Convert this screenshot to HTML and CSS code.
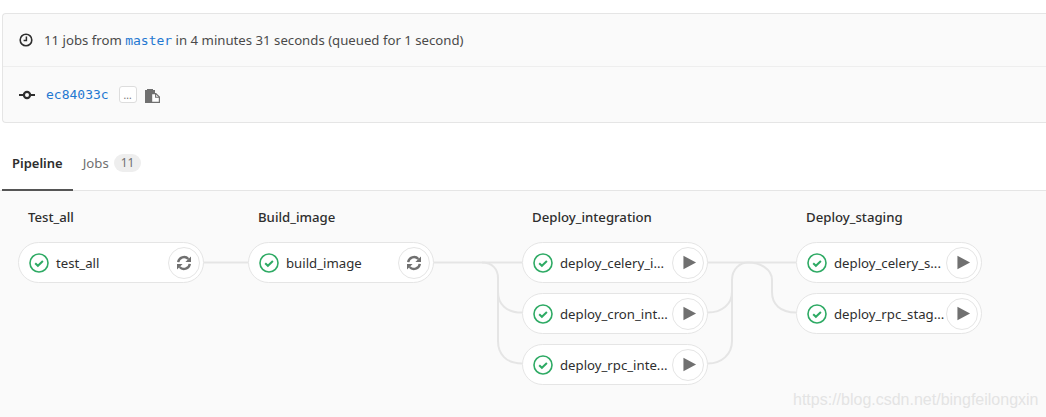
FILE: index.html
```html
<!DOCTYPE html>
<html lang="en">
<head>
    <meta charset="UTF-8">
    <meta name="viewport" content="width=device-width, initial-scale=1.0">
    <title>Pipeline</title>
    <link rel="stylesheet" href="styles.css">
</head>
<body>
    <svg class="icon-defs" width="0" height="0">
        <symbol id="status-ok" viewBox="0 0 20 20">
            <circle cx="10" cy="10" r="9" fill="#fff" stroke="#2eaa64" stroke-width="1.6"/>
            <path d="M6.2 10.2l2.7 2.6 5-4.8" fill="none" stroke="#2eaa64" stroke-width="2"/>
        </symbol>
        <symbol id="retry" viewBox="0 0 16 16">
            <path d="M2.2 7.2A5.9 5.9 0 0 1 12.4 4M13.8 8.8A5.9 5.9 0 0 1 3.6 12" fill="none" stroke="#707070" stroke-width="2.4"/>
            <path d="M15 1.4v5.6H9.4zM1 14.6V9h5.6z" fill="#707070"/>
        </symbol>
        <symbol id="play" viewBox="0 0 16 16">
            <path d="M1.5 0.8L15 8 1.5 15.2z" fill="#707070"/>
        </symbol>
    </svg>

    <div class="info-card">
        <div class="info-row">
            <svg class="info-icon" width="14" height="14" viewBox="0 0 14 14">
                <circle cx="7" cy="7" r="5.8" fill="none" stroke="#2e2e2e" stroke-width="1.6"/>
                <path d="M7.4 3.6v4H4.6" fill="none" stroke="#2e2e2e" stroke-width="1.5"/>
            </svg>
            <span>11 jobs from <a class="mono" href="#">master</a> in 4 minutes 31 seconds (queued for 1 second)</span>
        </div>
        <div class="info-row commit-row">
            <svg class="commit-icon" width="16" height="10" viewBox="0 0 16 10">
                <path d="M0 5h4M12 5h4" stroke="#2e2e2e" stroke-width="2"/>
                <circle cx="8" cy="5" r="3.1" fill="none" stroke="#2e2e2e" stroke-width="2.2"/>
            </svg>
            <a class="mono" href="#">ec84033c</a>
            <span class="ellipsis-btn">...</span>
            <svg class="copy-icon" width="15" height="14" viewBox="0 0 15 14">
                <path d="M0 1h2V0h6v1h2v3H6v10H0z" fill="#707070"/>
                <path d="M6.6 4.6h4.2l3.6 3.4v5.4H6.6z" fill="#fff" stroke="#707070" stroke-width="1.2"/>
                <path d="M10.6 4.6v3.6h3.8" fill="none" stroke="#707070" stroke-width="1.1"/>
            </svg>
        </div>
    </div>

    <div class="tabs">
        <a class="tab active" href="#">Pipeline</a>
        <a class="tab" href="#">Jobs <span class="badge">11</span></a>
    </div>

    <div class="pipeline">
        <div class="stage">
            <h4>Test_all</h4>
            <div class="job">
                <svg class="status"><use href="#status-ok"/></svg>
                <span class="job-name">test_all</span>
                <span class="job-action"><svg class="retry-icon"><use href="#retry"/></svg></span>
            </div>
        </div>
        <svg class="link link-short" width="44" height="144" viewBox="0 0 44 144">
            <path d="M0 20.5H44"/>
        </svg>
        <div class="stage">
            <h4>Build_image</h4>
            <div class="job">
                <svg class="status"><use href="#status-ok"/></svg>
                <span class="job-name">build_image</span>
                <span class="job-action"><svg class="retry-icon"><use href="#retry"/></svg></span>
            </div>
        </div>
        <svg class="link" width="88" height="144" viewBox="0 0 88 144">
            <path d="M0 20.5H88"/>
            <path d="M48 20.5C58 20.5 64 27 64 36V50C64 62 72 70.5 88 70.5"/>
            <path d="M64 50V99C64 112 72 121.5 88 121.5"/>
        </svg>
        <div class="stage">
            <h4>Deploy_integration</h4>
            <div class="job">
                <svg class="status"><use href="#status-ok"/></svg>
                <span class="job-name">deploy_celery_i...</span>
                <span class="job-action"><svg class="play-icon"><use href="#play"/></svg></span>
            </div>
            <div class="job">
                <svg class="status"><use href="#status-ok"/></svg>
                <span class="job-name">deploy_cron_int...</span>
                <span class="job-action"><svg class="play-icon"><use href="#play"/></svg></span>
            </div>
            <div class="job">
                <svg class="status"><use href="#status-ok"/></svg>
                <span class="job-name">deploy_rpc_inte...</span>
                <span class="job-action"><svg class="play-icon"><use href="#play"/></svg></span>
            </div>
        </div>
        <svg class="link" width="88" height="144" viewBox="0 0 88 144">
            <path d="M0 20.5H88"/>
            <path d="M0 70.5C14 70.5 24 62 24 50V38C24 27 32 20.5 40 20.5C52 20.5 64 27 64 38V50C64 62 72 70.5 88 70.5"/>
            <path d="M0 121.5C14 121.5 24 112 24 99V38"/>
        </svg>
        <div class="stage">
            <h4>Deploy_staging</h4>
            <div class="job">
                <svg class="status"><use href="#status-ok"/></svg>
                <span class="job-name">deploy_celery_s...</span>
                <span class="job-action"><svg class="play-icon"><use href="#play"/></svg></span>
            </div>
            <div class="job">
                <svg class="status"><use href="#status-ok"/></svg>
                <span class="job-name">deploy_rpc_stag...</span>
                <span class="job-action"><svg class="play-icon"><use href="#play"/></svg></span>
            </div>
        </div>
        <div class="watermark">https://blog.csdn.net/bingfeilongxin</div>
    </div>
</body>
</html>
```

FILE: styles.css
```css
html, body {
    height: 100%;
}
body {
    font-family: "Noto Sans", sans-serif;
    font-size: 13.2px;
    color: #2e2e2e;
    background-color: #fff;
    margin: 0;
    padding: 13px 0 0 0;
    box-sizing: border-box;
    overflow: hidden;
    display: flex;
    flex-direction: column;
}
a {
    color: #1f78d1;
    text-decoration: none;
}
.icon-defs {
    position: absolute;
}
.mono {
    font-family: "DejaVu Sans Mono", monospace;
    font-size: 13px;
}
.info-card {
    margin-left: 2px;
    height: 110px;
    box-sizing: border-box;
    background-color: #fafafa;
    border: 1px solid #e5e5e5;
    border-right: none;
    border-radius: 4px 0 0 4px;
    flex-shrink: 0;
}
.info-row {
    height: 52px;
    display: flex;
    align-items: center;
    padding-left: 16px;
    color: #4a4a4a;
}
.info-icon {
    margin-right: 11px;
}
.commit-row {
    height: 56px;
    box-sizing: border-box;
    border-top: 1px solid #eee;
}
.commit-icon {
    margin-right: 11px;
}
.ellipsis-btn {
    width: 16px;
    height: 15px;
    margin-left: 10px;
    background: #fff;
    border: 1px solid #ddd;
    border-radius: 3px;
    font-size: 10px;
    line-height: 16px;
    text-align: center;
    color: #707070;
}
.copy-icon {
    margin-left: 8px;
    margin-top: 2px;
}
.tabs {
    display: flex;
    align-items: stretch;
    height: 68px;
    padding-left: 2px;
    border-bottom: 1px solid #e5e5e5;
    flex-shrink: 0;
    box-sizing: border-box;
}
.tab {
    display: flex;
    align-items: center;
    gap: 5px;
    padding: 14px 10px 0 10px;
    color: #707070;
    margin-bottom: -1px;
    border-bottom: 2px solid transparent;
}
.tab.active {
    color: #2e2e2e;
    font-size: 13px;
    font-weight: 600;
    border-bottom-color: #555;
}
.badge {
    background-color: #eee;
    color: #707070;
    border-radius: 9px;
    padding: 0 7px;
    font-size: 12px;
    line-height: 18px;
}
.pipeline {
    flex: 1;
    position: relative;
    display: flex;
    align-items: flex-start;
    padding: 16px 0 0 18px;
    background-color: #fafafa;
}
.stage {
    width: 186px;
    flex-shrink: 0;
}
.stage h4 {
    margin: 0 0 15px 10px;
    font-size: 13.2px;
    font-weight: 500;
    line-height: 20px;
    color: #2e2e2e;
}
.job {
    height: 41px;
    box-sizing: border-box;
    margin-bottom: 10px;
    display: flex;
    align-items: center;
    padding: 0 3px 0 10px;
    background-color: #fff;
    border: 1px solid #e5e5e5;
    border-radius: 21px;
}
.status {
    width: 20px;
    height: 20px;
    flex-shrink: 0;
    margin-right: 7px;
}
.job-name {
    flex: 1;
    white-space: nowrap;
    color: #2e2e2e;
}
.job-action {
    width: 30px;
    height: 30px;
    flex-shrink: 0;
    display: flex;
    align-items: center;
    justify-content: center;
    background-color: #fff;
    border: 1px solid #e5e5e5;
    border-radius: 50%;
}
.retry-icon {
    width: 16px;
    height: 16px;
}
.play-icon {
    width: 15px;
    height: 15px;
    margin-left: 2px;
}
.link {
    margin-top: 35px;
    flex-shrink: 0;
}
.link path {
    fill: none;
    stroke: #e5e5e5;
    stroke-width: 2;
}
.watermark {
    position: absolute;
    left: 793px;
    bottom: 8px;
    font-family: "Liberation Sans", sans-serif;
    font-size: 16px;
    color: rgba(225, 225, 225, 0.9);
    white-space: nowrap;
}
```
